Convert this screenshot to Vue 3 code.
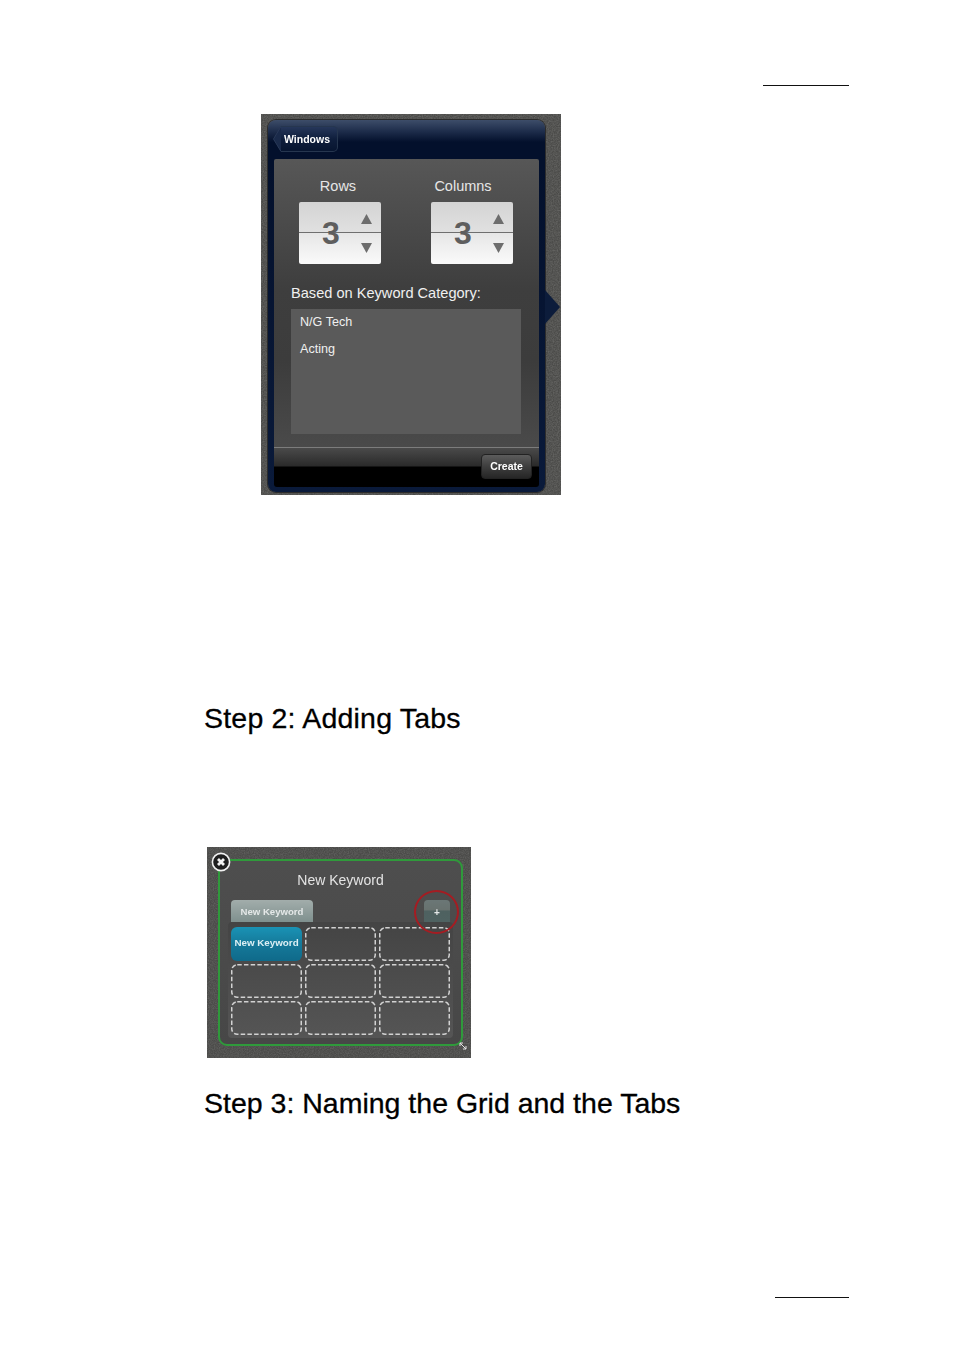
<script setup>
const steppers = [
  { label: 'Rows', value: 3 },
  { label: 'Columns', value: 3 },
]
const categories = ['N/G Tech', 'Acting']
const cells = Array.from({ length: 9 }, (_, i) => i)
</script>

<template>
  <div class="page">
    <div class="rule rule-top"></div>

    <div class="shot shot-one">
      <svg class="noise" width="100%" height="100%" aria-hidden="true">
        <filter id="grain-a"><feTurbulence type="fractalNoise" baseFrequency="0.8" numOctaves="2" /><feColorMatrix values="0 0 0 0 0.85  0 0 0 0 0.85  0 0 0 0 0.82  0.9 0 0 0 -0.25" /></filter>
        <rect width="100%" height="100%" filter="url(#grain-a)" />
      </svg>
      <div class="popover">
        <svg class="pointer" width="16" height="34" viewBox="0 0 16 34" aria-hidden="true"><path d="M0 0 L15 17 L0 34 Z" fill="#0c1c3b" /></svg>
        <div class="nav">
          <div class="back">
            <svg class="back-tip" width="8" height="26" viewBox="0 0 8 26" aria-hidden="true"><path d="M8 0.5 L0.5 13 L8 25.5" fill="#1a2a4a" stroke="#2a3a58" /></svg>
            <span>Windows</span>
          </div>
        </div>
        <div class="content">
          <div class="steppers">
            <div v-for="s in steppers" :key="s.label" class="stepper-col">
              <div class="stepper-label">{{ s.label }}</div>
              <div class="stepper">
                <span class="stepper-value">{{ s.value }}</span>
                <div class="arrows">
                  <svg width="11" height="10" viewBox="0 0 11 10" aria-hidden="true"><path d="M5.5 0 L11 10 L0 10 Z" fill="#6d6d6d" /></svg>
                  <svg width="11" height="10" viewBox="0 0 11 10" aria-hidden="true"><path d="M0 0 L11 0 L5.5 10 Z" fill="#6d6d6d" /></svg>
                </div>
              </div>
            </div>
          </div>
          <div class="based">Based on Keyword Category:</div>
          <div class="list">
            <div v-for="c in categories" :key="c" class="list-item">{{ c }}</div>
          </div>
        </div>
        <div class="footer">
          <div class="create">Create</div>
        </div>
      </div>
    </div>

    <h2 class="heading heading-two">Step 2: Adding Tabs</h2>

    <div class="shot shot-two">
      <svg class="noise" width="100%" height="100%" aria-hidden="true">
        <filter id="grain-b"><feTurbulence type="fractalNoise" baseFrequency="0.8" numOctaves="2" /><feColorMatrix values="0 0 0 0 0.85  0 0 0 0 0.85  0 0 0 0 0.85  0.8 0 0 0 -0.25" /></filter>
        <rect width="100%" height="100%" filter="url(#grain-b)" />
      </svg>
      <div class="board">
        <div class="board-title">New Keyword</div>
        <div class="tabs">
          <div class="tab">New Keyword</div>
          <div class="add">+</div>
        </div>
        <div class="grid">
          <div v-for="c in cells" :key="c" class="cell" :class="{ filled: c === 0 }">
            <template v-if="c === 0">New Keyword</template>
            <svg v-else class="dash" width="71" height="34" viewBox="0 0 71 34" aria-hidden="true">
              <rect x="0.75" y="0.75" width="69.5" height="32.5" rx="5.5" fill="none" stroke="#d2d2d2" stroke-width="1.5" stroke-dasharray="4.5 2.2" />
            </svg>
          </div>
        </div>
      </div>
      <svg class="close" width="20" height="20" viewBox="0 0 20 20" aria-hidden="true">
        <circle cx="10" cy="10" r="8.6" fill="#1f1f1f" stroke="#f2f2f2" stroke-width="1.6" />
        <path d="M7 7 L13 13 M13 7 L7 13" stroke="#f2f2f2" stroke-width="2.8" />
      </svg>
      <svg class="handle" width="8" height="8" viewBox="0 0 8 8" aria-hidden="true"><path d="M1 1 L7 7 M1 1 L4 1 M1 1 L1 4 M7 7 L4 7 M7 7 L7 4" stroke="#e4e4e4" stroke-width="1" fill="none" /></svg>
      <div class="ring"></div>
    </div>

    <h2 class="heading heading-three">Step 3: Naming the Grid and the Tabs</h2>

    <div class="rule rule-bottom"></div>
  </div>
</template>

<style>
html, body { margin: 0; background: #fff; }
</style>

<style scoped>
.page {
  width: 954px;
  height: 1349px;
  padding-top: 85px;
  box-sizing: border-box;
  background: #fff;
  display: flex;
  flex-direction: column;
  font-family: "Liberation Sans", Arial, sans-serif;
  overflow: hidden;
}
.rule { height: 1px; background: #111; align-self: flex-end; margin-right: 105px; }
.rule-top { width: 86px; }
.rule-bottom { width: 74px; margin-top: 177px; }

.shot { position: relative; box-sizing: border-box; background: #4b4b49; overflow: hidden; }
.noise { position: absolute; inset: 0; opacity: 0.3; }

.shot-one { width: 300px; height: 381px; margin: 28px 0 0 261px; padding: 6px 16px 3px 7px; }
.popover {
  position: relative;
  height: 372px;
  box-sizing: border-box;
  border-radius: 8px;
  background: linear-gradient(#3d4d69 0, #1c2b49 12px, #03102c 22px, #03102c 45px, #0a1a3a 100%);
  box-shadow: 0 0 0 1px #2c2c2c;
  padding: 0 6px 5px;
  display: flex;
  flex-direction: column;
  filter: blur(0.3px);
}
.pointer { position: absolute; left: 100%; top: 170px; }
.nav { height: 39px; padding-top: 6px; box-sizing: border-box; }
.back {
  position: relative;
  width: 57px;
  height: 26px;
  margin-left: 7px;
  box-sizing: border-box;
  padding-top: 6px;
  border: 1px solid #26364f;
  border-left: none;
  border-radius: 0 5px 5px 0;
  background: linear-gradient(#26375a, #0f1e3c 50%, #071530);
  color: #fff;
  font-size: 10.5px;
  font-weight: 700;
  line-height: 13px;
  text-indent: 3px;
}
.back-tip { position: absolute; right: 100%; top: -1px; }

.content {
  flex: 1;
  min-height: 0;
  background: linear-gradient(#575757, #3e3e3e 45%, #3c3c3c 70%, #4a4a4a);
  border-radius: 2px 2px 0 0;
  padding: 19px 18px 0 17px;
}
.steppers { display: flex; gap: 50px; padding-left: 8px; }
.stepper-col { width: 82px; display: flex; flex-direction: column; align-items: center; gap: 7px; }
.stepper-label { color: #e6e6e6; font-size: 14.5px; line-height: 17px; white-space: nowrap; }
.stepper-col:nth-child(1) .stepper-label { margin-right: 4px; }
.stepper-col:nth-child(2) .stepper-label { margin-right: 18px; }
.stepper {
  position: relative;
  width: 82px;
  height: 62px;
  box-sizing: border-box;
  border-radius: 2px;
  background: linear-gradient(#d4d4d4, #e0e0e0 48%, #6f6f6f 48%, #6f6f6f 49.5%, #e6e6e6 49.5%, #fafafa);
  display: flex;
  align-items: center;
  justify-content: space-between;
  padding: 0 9px 0 23px;
}
.stepper-value { color: #5e5e5e; font-size: 32px; font-weight: 700; line-height: 62px; }
.arrows { height: 39px; margin-top: 1px; display: flex; flex-direction: column; justify-content: space-between; }
.arrows svg { display: block; }
.based { margin-top: 20px; color: #f0f0f0; font-size: 14.6px; line-height: 18px; white-space: nowrap; }
.list {
  height: 125px;
  margin-top: 7px;
  background: #5a5a5a;
  padding: 5px 9px;
  box-sizing: border-box;
}
.list-item { color: #f0f0f0; font-size: 12.6px; line-height: 17px; margin-bottom: 9.5px; }

.footer {
  position: relative;
  height: 40px;
  flex: none;
  box-sizing: border-box;
  border-top: 1px solid #7c7c7c;
  background: linear-gradient(#4a4a4a, #2a2a2a 18px, #000 19px, #000);
  border-radius: 0 0 3px 3px;
  display: flex;
  justify-content: flex-end;
  padding: 6px 7px 0 0;
}
.create {
  width: 51px;
  height: 25px;
  box-sizing: border-box;
  border: 1px solid #222;
  border-radius: 4px;
  background: linear-gradient(#5c5c5c, #3e3e3e 50%, #262626);
  color: #fff;
  font-size: 10.5px;
  font-weight: 700;
  line-height: 23px;
  text-align: center;
}

.heading {
  margin: 0;
  padding-left: 204px;
  height: 34px;
  color: #000;
  font-size: 28.5px;
  font-weight: 400;
  line-height: 34px;
  white-space: nowrap;
  -webkit-text-stroke: 0.3px #000;
}
.heading-two { margin-top: 206px; letter-spacing: 0.2px; }
.heading-three { margin-top: 28px; }

.shot-two { width: 264px; height: 211px; margin: 112px 0 0 207px; padding: 12px 8px 12px 11px; }
.board {
  position: relative;
  height: 187px;
  box-sizing: border-box;
  border: 2px solid #2f9a3b;
  border-radius: 9px;
  background: linear-gradient(#4e4e4e, #474747);
  padding: 0 10px;
  filter: blur(0.35px);
}
.board-title { margin-top: 10px; color: #e4e4e4; font-size: 14px; line-height: 18px; text-align: center; }
.tabs { display: flex; justify-content: space-between; margin-top: 11px; padding: 0 1px 0 1px; }
.tab, .add {
  height: 22px;
  border-radius: 4px 4px 0 0;
  box-sizing: border-box;
  color: #e4e8e8;
  font-weight: 700;
  text-align: center;
}
.tab { width: 82px; background: linear-gradient(#a2adab, #7f908e); font-size: 9.6px; line-height: 23px; }
.add { width: 26px; background: linear-gradient(#6b7776 0, #68726f 45%, #4e6160 50%, #4f6261); font-size: 10px; line-height: 25px; }
.grid {
  margin: 0 -2px 0 -2px;
  padding: 5px 3px 3px 3px;
  border-radius: 4px;
  background: linear-gradient(#444, #555);
  display: grid;
  grid-template-columns: repeat(3, 71px);
  gap: 3px;
}
.cell {
  height: 34px;
  box-sizing: border-box;
  border-radius: 6px;
}
.dash { display: block; }
.cell.filled {
  background: linear-gradient(#1a93b5, #15799a 50%, #0f6a8a);
  color: #dceff4;
  font-size: 9.8px;
  font-weight: 700;
  line-height: 32px;
  text-align: center;
  white-space: nowrap;
}
.close { position: absolute; left: 4px; top: 5px; }
.handle { position: absolute; left: 252px; top: 195px; }
.ring {
  position: absolute;
  left: 207px;
  top: 43px;
  width: 45px;
  height: 44px;
  box-sizing: border-box;
  border: 2.5px solid #a51c22;
  border-radius: 50%;
}
</style>
